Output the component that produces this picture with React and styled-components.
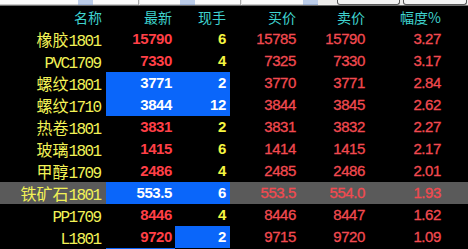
import React from "react";
import styled, { createGlobalStyle } from "styled-components";

const Global = createGlobalStyle`
  html, body { margin: 0; padding: 0; background: #000; overflow: hidden; }
  #root { width: 468px; height: 249px; overflow: hidden; }
`;

const COLS = [
  { w: 106, pr: 4 },
  { w: 69, pr: 3 },
  { w: 55, pr: 4 },
  { w: 70, pr: 4 },
  { w: 68, pr: 3 },
  { w: 100, pr: 27 },
];
const TEMPLATE = COLS.map((c) => `${c.w}px`).join(" ");

const Page = styled.div`
  width: 468px;
  height: 249px;
  background: #000;
  overflow: hidden;
  display: flex;
  flex-direction: column;
`;

const TopBar = styled.div`
  display: flex;
  height: 5px;
  flex: none;
  background: #ecebea;
  border-bottom: 1px solid #6e6e6e;
`;

const Field = styled.div`
  width: ${(p) => p.$w}px;
  background: #fbfbfb;
  border-bottom: 1px solid #c8c8c8;
  box-sizing: border-box;
`;

const Thumb = styled.div`
  width: ${(p) => p.$w}px;
  background: #bccde9;
  border-bottom: 1px solid #9aaed0;
  box-sizing: border-box;
`;

const Gap = styled.div`
  width: ${(p) => p.$w}px;
  background: #e6e6e6;
  border-left: 1px solid #a8a8a8;
  box-sizing: border-box;
`;

const Box = styled.div`
  width: ${(p) => p.$w}px;
  margin-left: ${(p) => p.$ml}px;
  border: 1px solid #5a5a5a;
  border-top: none;
  border-radius: 0 0 3px 3px;
  background: #f4f4f4;
  box-sizing: border-box;
`;

const Grid = styled.div`
  display: flex;
  flex-direction: column;
`;

const Row = styled.div`
  display: grid;
  grid-template-columns: ${TEMPLATE};
  height: 22px;
  flex: none;
  background: ${(p) => (p.$sel ? "#5a5a5a" : "#000")};
`;

const HeadCell = styled.div`
  text-align: right;
  padding-right: ${(p) => p.$pr}px;
  font-family: "Noto Sans CJK SC", "Liberation Sans", sans-serif;
  font-size: 14px;
  line-height: 22px;
  color: #3fd3cf;
  white-space: nowrap;
`;

const NameCell = styled.div`
  text-align: right;
  padding-right: ${(p) => p.$pr}px;
  font-family: "Noto Sans CJK SC", sans-serif;
  font-size: 16px;
  line-height: 22px;
  color: #f2f256;
  white-space: nowrap;
`;

const Code = styled.span`
  font-family: "Liberation Mono", monospace;
  font-size: 16px;
  letter-spacing: -1.6px;
  margin-right: 1.6px;
`;

const NumCell = styled.div`
  text-align: right;
  padding-right: ${(p) => p.$pr}px;
  font-family: "Liberation Sans", Arial, sans-serif;
  font-size: 15px;
  letter-spacing: -0.4px;
  line-height: 22px;
  font-weight: ${(p) => (p.$bold ? 700 : 400)};
  -webkit-text-stroke: ${(p) => (p.$bold ? "0" : "0.3px")};
  color: ${(p) => (p.$hl ? "#ffffff" : p.$color)};
  background: ${(p) => (p.$hl ? "#0a66fa" : "transparent")};
  white-space: nowrap;
`;

const RED = "#ff3f46";
const RED2 = "#f24a50";
const YEL = "#f6f640";

const headers = ["名称", "最新", "现手", "买价", "卖价", "幅度%"];

const rows = [
  { cn: "橡胶", code: "1801", v: ["15790", "6", "15785", "15790", "3.27"], hl: [] },
  { cn: "", code: "PVC1709", v: ["7330", "4", "7325", "7330", "3.17"], hl: [] },
  { cn: "螺纹", code: "1801", v: ["3771", "2", "3770", "3771", "2.84"], hl: [1, 2] },
  { cn: "螺纹", code: "1710", v: ["3844", "12", "3844", "3845", "2.62"], hl: [1, 2] },
  { cn: "热卷", code: "1801", v: ["3831", "2", "3831", "3832", "2.27"], hl: [] },
  { cn: "玻璃", code: "1801", v: ["1415", "6", "1414", "1415", "2.17"], hl: [] },
  { cn: "甲醇", code: "1709", v: ["2486", "4", "2485", "2486", "2.01"], hl: [] },
  { cn: "铁矿石", code: "1801", v: ["553.5", "6", "553.5", "554.0", "1.93"], hl: [1, 2], sel: true },
  { cn: "", code: "PP1709", v: ["8446", "4", "8446", "8447", "1.62"], hl: [] },
  { cn: "", code: "L1801", v: ["9720", "2", "9715", "9720", "1.09"], hl: [2] },
  { cn: "", code: "", v: ["", "", "", "", ""], hl: [1] },
];

function colorFor(i) {
  if (i === 1) return RED;
  if (i === 2) return YEL;
  return RED2;
}

export default function App() {
  return (
    <>
      <Global />
      <Page>
        <TopBar>
          <Field $w={78} />
          <Thumb $w={15} />
          <Field $w={45} />
          <Gap $w={2} />
          <Field $w={40} />
          <Thumb $w={15} />
          <Field $w={45} />
          <Gap $w={2} />
          <Field $w={61} />
          <Thumb $w={15} />
          <Box $w={63} $ml={19} />
          <Box $w={64} $ml={3} />
        </TopBar>
        <Grid>
          <Row>
            {headers.map((h, i) => (
              <HeadCell key={h} $pr={COLS[i].pr}>
                {h}
              </HeadCell>
            ))}
          </Row>
          {rows.map((r, ri) => (
            <Row key={ri} $sel={r.sel}>
              <NameCell $pr={COLS[0].pr}>
                {r.cn}
                <Code>{r.code}</Code>
              </NameCell>
              {r.v.map((val, i) => {
                const ci = i + 1;
                return (
                  <NumCell
                    key={ci}
                    $pr={COLS[ci].pr}
                    $bold={ci <= 2}
                    $hl={r.hl.includes(ci)}
                    $color={colorFor(ci)}
                  >
                    {val}
                  </NumCell>
                );
              })}
            </Row>
          ))}
        </Grid>
      </Page>
    </>
  );
}
